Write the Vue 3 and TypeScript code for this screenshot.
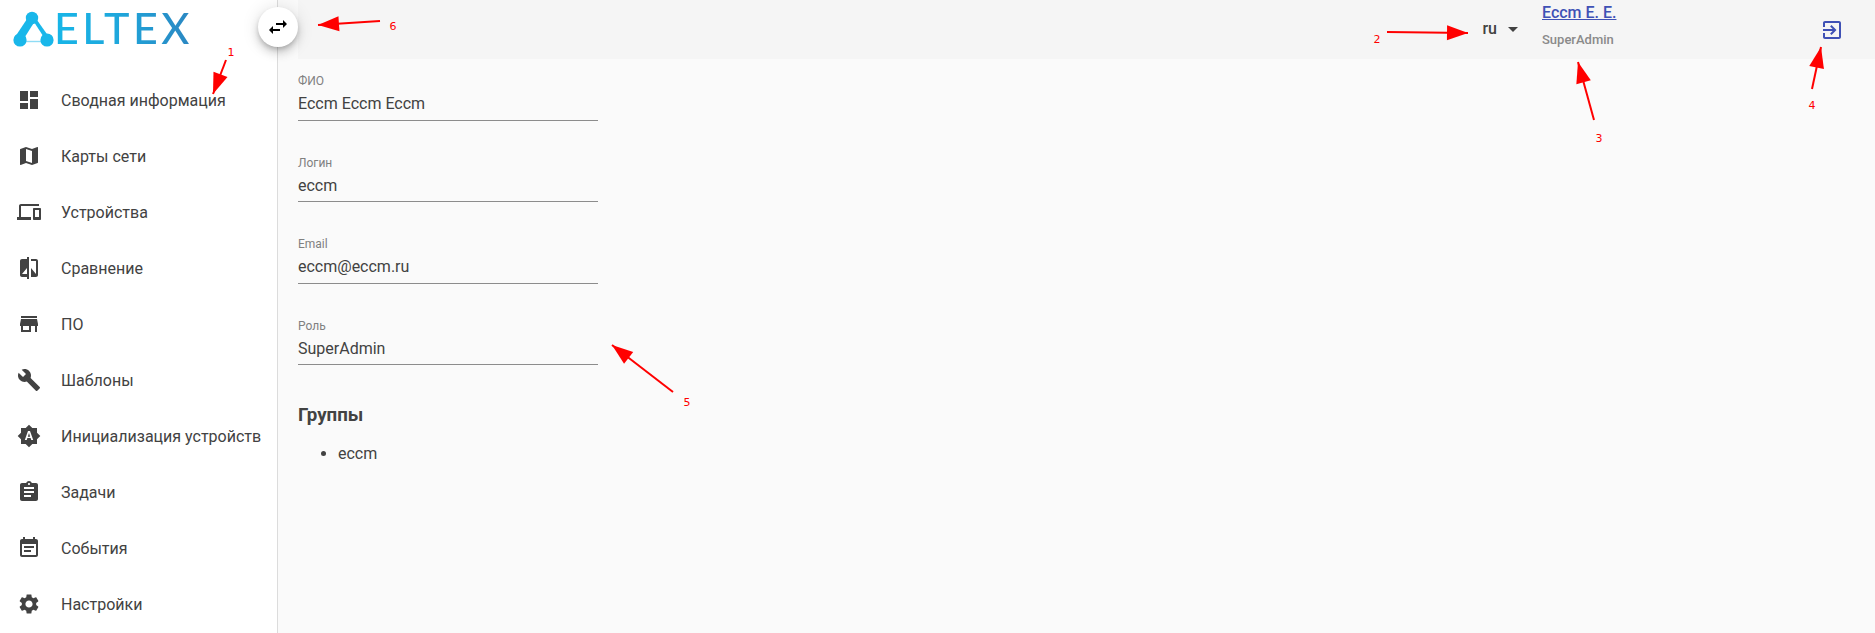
<script setup lang="ts">
interface NavItem { label: string; icon: string }
interface Arrow { x1: number; y1: number; x2: number; y2: number; n: string; tx: number; ty: number }

const nav: NavItem[] = [
  { label: 'Сводная информация', icon: 'M3 13h8V3H3v10zm0 8h8v-6H3v6zm10 0h8V11h-8v10zm0-18v6h8V3h-8z' },
  { label: 'Карты сети', icon: 'M20.5 3l-.16.03L15 5.1 9 3 3.36 4.9c-.21.07-.36.25-.36.48V20.5c0 .28.22.5.5.5l.16-.03L9 18.9l6 2.1 5.64-1.9c.21-.07.36-.25.36-.48V3.5c0-.28-.22-.5-.5-.5zM15 19l-6-2.11V5l6 2.11V19z' },
  { label: 'Устройства', icon: 'M4 6h18V4H4c-1.1 0-2 .9-2 2v11H0v3h14v-3H4V6zm19 2h-6c-.55 0-1 .45-1 1v10c0 .55.45 1 1 1h6c.55 0 1-.45 1-1V9c0-.55-.45-1-1-1zm-1 9h-4v-7h4v7z' },
  { label: 'Сравнение', icon: 'M10 3H5c-1.1 0-2 .9-2 2v14c0 1.1.9 2 2 2h5v2h2V1h-2v2zm0 15H5l5-6v6zm9-15h-5v2h5v13l-5-6v9h5c1.1 0 2-.9 2-2V5c0-1.1-.9-2-2-2z' },
  { label: 'ПО', icon: 'M20 4H4v2h16V4zm1 10v-2l-1-5H4l-1 5v2h1v6h10v-6h4v6h2v-6h1zm-9 4H6v-4h6v4z' },
  { label: 'Шаблоны', icon: 'M22.7 19l-9.1-9.1c.9-2.3.4-5-1.5-6.9-2-2-5-2.4-7.4-1.3L9 6 6 9 1.6 4.7C.4 7.1.9 10.1 2.9 12.1c1.9 1.9 4.6 2.4 6.9 1.5l9.1 9.1c.4.4 1 .4 1.4 0l2.3-2.3c.5-.4.5-1.1.1-1.4z' },
  { label: 'Инициализация устройств', icon: 'M10.85 12.65h2.3L12 9l-1.15 3.65zM20 8.69V4h-4.69L12 .69 8.69 4H4v4.69L.69 12 4 15.31V20h4.69L12 23.31 15.31 20H20v-4.69L23.31 12 20 8.69zM14.3 16l-.7-2h-3.2l-.7 2H7.8L11 7h2l3.2 9h-1.9z' },
  { label: 'Задачи', icon: 'M19 3h-4.18C14.4 1.84 13.3 1 12 1c-1.3 0-2.4.84-2.82 2H5c-1.1 0-2 .9-2 2v14c0 1.1.9 2 2 2h14c1.1 0 2-.9 2-2V5c0-1.1-.9-2-2-2zm-7 0c.55 0 1 .45 1 1s-.45 1-1 1-1-.45-1-1 .45-1 1-1zm2 14H7v-2h7v2zm3-4H7v-2h10v2zm0-4H7V7h10v2z' },
  { label: 'События', icon: 'M17 10H7v2h10v-2zm2-7h-1V1h-2v2H8V1H6v2H5c-1.11 0-1.99.9-1.99 2L3 19c0 1.1.89 2 2 2h14c1.1 0 2-.9 2-2V5c0-1.1-.9-2-2-2zm0 16H5V8h14v11zm-5-5H7v2h7v-2z' },
  { label: 'Настройки', icon: 'M19.14 12.94c.04-.3.06-.61.06-.94 0-.32-.02-.64-.07-.94l2.03-1.58c.18-.14.23-.41.12-.61l-1.92-3.32c-.12-.22-.37-.29-.59-.22l-2.39.96c-.5-.38-1.03-.7-1.62-.94l-.36-2.54c-.04-.24-.24-.41-.48-.41h-3.84c-.24 0-.43.17-.47.41l-.36 2.54c-.59.24-1.13.57-1.62.94l-2.39-.96c-.22-.08-.47 0-.59.22L2.74 8.87c-.12.21-.08.47.12.61l2.03 1.58c-.05.3-.09.63-.09.94s.02.64.07.94l-2.03 1.58c-.18.14-.23.41-.12.61l1.92 3.32c.12.22.37.29.59.22l2.39-.96c.5.38 1.03.7 1.62.94l.36 2.54c.05.24.24.41.48.41h3.84c.24 0 .44-.17.47-.41l.36-2.54c.59-.24 1.13-.56 1.62-.94l2.39.96c.22.08.47 0 .59-.22l1.92-3.32c.12-.22.07-.47-.12-.61l-2.01-1.58zM12 15.6c-1.98 0-3.6-1.62-3.6-3.6s1.62-3.6 3.6-3.6 3.6 1.62 3.6 3.6-1.62 3.6-3.6 3.6z' },
]

const fields = [
  { label: 'ФИО', value: 'Eccm Eccm Eccm' },
  { label: 'Логин', value: 'eccm' },
  { label: 'Email', value: 'eccm@eccm.ru' },
  { label: 'Роль', value: 'SuperAdmin' },
]

const arrows: Arrow[] = [
  { x1: 226, y1: 60, x2: 213, y2: 94, n: '1', tx: 231, ty: 56 },
  { x1: 1387, y1: 32, x2: 1468, y2: 33, n: '2', tx: 1377, ty: 43 },
  { x1: 1594, y1: 120, x2: 1578, y2: 62, n: '3', tx: 1599, ty: 142 },
  { x1: 1812, y1: 89, x2: 1821, y2: 47, n: '4', tx: 1812, ty: 109 },
  { x1: 673, y1: 392, x2: 612, y2: 345, n: '5', tx: 687, ty: 406 },
  { x1: 380, y1: 21, x2: 318, y2: 25, n: '6', tx: 393, ty: 30 },
]

function head(a: Arrow): string {
  const dx = a.x2 - a.x1
  const dy = a.y2 - a.y1
  const len = Math.hypot(dx, dy)
  const ux = dx / len
  const uy = dy / len
  const bx = a.x2 - ux * 21
  const by = a.y2 - uy * 21
  return `${a.x2},${a.y2} ${bx - uy * 7.5},${by + ux * 7.5} ${bx + uy * 7.5},${by - ux * 7.5}`
}
</script>

<template>
  <div class="page">
    <aside class="side">
      <div class="logo">
        <svg class="mark" width="42" height="40" viewBox="0 0 42 40">
          <polygon points="15,9 23,11 11,30 3,27" fill="#19b7ea" />
          <polygon points="22,12 25,10 37,27 33,29" fill="#19b7ea" />
          <line x1="9" y1="31.5" x2="34" y2="31.5" stroke="#8fdcf5" stroke-width="1.4" />
          <circle cx="20" cy="8" r="6.2" fill="#19b7ea" />
          <circle cx="8" cy="30" r="6.6" fill="#19b7ea" />
          <circle cx="35" cy="30" r="6.6" fill="#19b7ea" />
        </svg>
        <span class="word">ELTEX</span>
      </div>
      <nav>
        <a v-for="item in nav" :key="item.label" class="row">
          <svg class="ic" width="24" height="24" viewBox="0 0 24 24"><path :d="item.icon" /></svg>
          <span>{{ item.label }}</span>
        </a>
      </nav>
    </aside>

    <div class="main">
      <header class="bar">
        <div class="lang">
          <span class="code">ru</span>
          <i class="caret"></i>
        </div>
        <div class="user">
          <a class="name">Eccm E. E.</a>
          <span class="role">SuperAdmin</span>
        </div>
        <svg class="exit" width="24" height="24" viewBox="0 0 24 24"><path d="M10.09 15.59L11.5 17l5-5-5-5-1.41 1.41L12.67 11H3v2h9.67l-2.58 2.59zM19 3H5c-1.11 0-2 .9-2 2v4h2V5h14v14H5v-4H3v4c0 1.1.89 2 2 2h14c1.1 0 2-.9 2-2V5c0-1.1-.9-2-2-2z" /></svg>
      </header>

      <section class="content">
        <div v-for="f in fields" :key="f.label" class="field">
          <label>{{ f.label }}</label>
          <div class="val">{{ f.value }}</div>
        </div>
        <h3>Группы</h3>
        <ul><li>eccm</li></ul>
      </section>
    </div>

    <button class="toggle" type="button">
      <svg width="24" height="24" viewBox="0 0 24 24"><path d="M6.99 11L3 15l3.99 4v-3H14v-2H6.99v-3zM21 9l-3.99-4v3H10v2h7.01v3L21 9z" /></svg>
    </button>

    <svg class="notes" width="1875" height="633" viewBox="0 0 1875 633">
      <g v-for="a in arrows" :key="a.n">
        <line :x1="a.x1" :y1="a.y1" :x2="a.x2" :y2="a.y2" stroke="#f00" stroke-width="2" />
        <polygon :points="head(a)" fill="#f00" />
        <text :x="a.tx" :y="a.ty" text-anchor="middle">{{ a.n }}</text>
      </g>
    </svg>
  </div>
</template>

<style scoped>
.page {
  position: relative;
  display: flex;
  width: 1875px;
  height: 633px;
  overflow: hidden;
  background: #fafafa;
  font-family: Roboto, "Noto Sans", sans-serif;
  color: #424242;
}
.side {
  width: 278px;
  flex: none;
  box-sizing: border-box;
  background: #fff;
  border-right: 1px solid #dcdcdc;
}
.logo {
  display: flex;
  align-items: flex-start;
  height: 72px;
  box-sizing: border-box;
  padding: 7px 0 0 12px;
}
.mark {
  margin-top: 3px;
  flex: none;
}
.word {
  font-family: Lato, sans-serif;
  font-size: 43px;
  font-weight: 500;
  line-height: 42px;
  letter-spacing: 3.5px;
  background: linear-gradient(90deg, #17b6e8 0%, #1ea7dc 45%, #2b86c1 100%);
  -webkit-background-clip: text;
  background-clip: text;
  color: transparent;
}
.row {
  display: flex;
  align-items: center;
  gap: 20px;
  height: 56px;
  padding-left: 17px;
  font-size: 16px;
  white-space: nowrap;
}
.ic {
  fill: #424242;
  flex: none;
}
.main {
  flex: 1;
  min-width: 0;
  padding-left: 20px;
}
.bar {
  display: flex;
  align-items: center;
  height: 59px;
  background: #f5f5f5;
  padding-right: 31px;
}
.lang {
  display: flex;
  align-items: center;
  margin-left: auto;
  font-size: 16px;
  font-weight: 500;
  gap: 11px;
}
.code {
  margin-bottom: 2px;
}
.caret {
  width: 0;
  height: 0;
  border-left: 5px solid transparent;
  border-right: 5px solid transparent;
  border-top: 5px solid #424242;
}
.user {
  display: flex;
  flex-direction: column;
  align-self: flex-start;
  width: 278px;
  margin-left: 24px;
  padding-top: 1px;
}
.name {
  font-size: 16px;
  font-weight: 500;
  line-height: 24px;
  color: #3f51b5;
  text-decoration: underline;
}
.role {
  margin-top: 7px;
  font-size: 13px;
  font-weight: 500;
  line-height: 16px;
  color: #8a8a8a;
}
.exit {
  fill: #3f51b5;
  flex: none;
}
.content {
  padding-top: 14.2px;
}
.field {
  width: 300px;
  margin-bottom: 33.8px;
  border-bottom: 1px solid #8c8c8c;
}
.field label {
  display: block;
  font-size: 12px;
  line-height: 16px;
  color: #808080;
}
.val {
  margin-top: 3px;
  padding-bottom: 3.7px;
  font-size: 16px;
  line-height: 24px;
}
h3 {
  margin: 0;
  padding-top: 2px;
  font-size: 18.72px;
  line-height: 28px;
  font-weight: 700;
}
ul {
  margin: 13px 0 0;
  padding-left: 40px;
  font-size: 16px;
  line-height: 24px;
}
.toggle {
  position: absolute;
  left: 258px;
  top: 7px;
  display: flex;
  align-items: center;
  justify-content: center;
  width: 40px;
  height: 40px;
  padding: 0;
  border: 0;
  border-radius: 50%;
  background: #fff;
  box-shadow: 0 3px 5px -1px rgba(0, 0, 0, .2), 0 6px 10px 0 rgba(0, 0, 0, .14), 0 1px 18px 0 rgba(0, 0, 0, .12);
}
.notes {
  position: absolute;
  left: 0;
  top: 0;
  pointer-events: none;
}
.notes text {
  font-family: "DejaVu Sans", sans-serif;
  font-size: 11px;
  fill: #f00;
}
</style>
